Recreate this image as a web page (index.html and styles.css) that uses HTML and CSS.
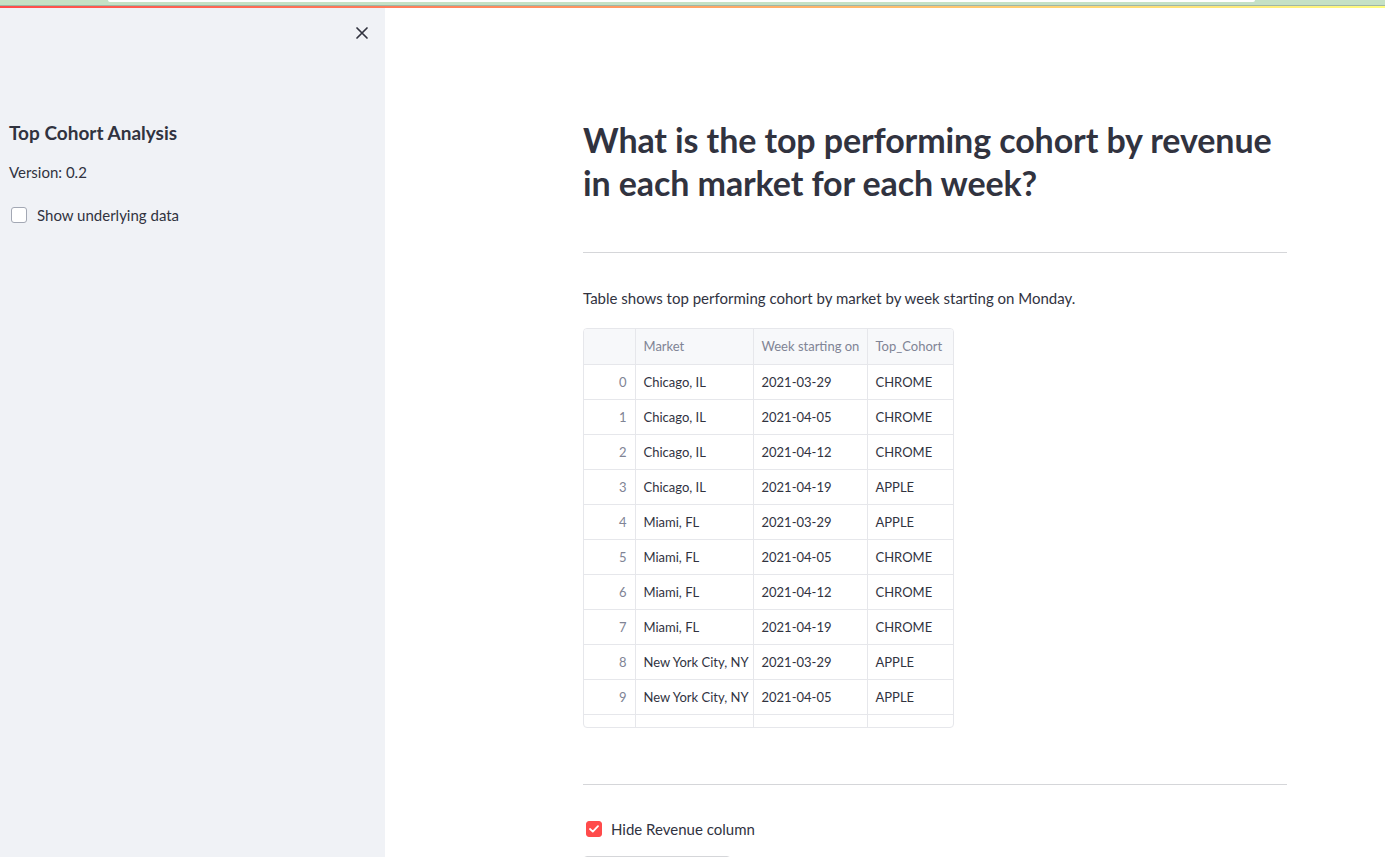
FILE: index.html
```html
<!DOCTYPE html>
<html lang="en">
<head>
<meta charset="utf-8">
<title>Top Cohort Analysis</title>
<link rel="stylesheet" href="styles.css">
</head>
<body>
<div class="chrome">
  <div class="chrome-tab"></div>
</div>
<div class="decoration"></div>
<div class="app">
  <aside class="sidebar">
    <div class="sidebar-head">
      <button class="close-btn" aria-label="Close sidebar">
        <svg width="14" height="14" viewBox="0 0 14 14"><path d="M2 2 L12 12 M12 2 L2 12" stroke="#31333f" stroke-width="1.7" stroke-linecap="round"/></svg>
      </button>
    </div>
    <h2 class="side-title">Top Cohort Analysis</h2>
    <p class="side-text">Version: 0.2</p>
    <label class="check">
      <span class="box"></span>
      <span>Show underlying data</span>
    </label>
  </aside>
  <main class="main">
    <div class="block">
      <h1 class="title">What is the top performing cohort by revenue in each market for each week?</h1>
      <hr class="divider">
      <p class="caption">Table shows top performing cohort by market by week starting on Monday.</p>
      <div class="table-wrap">
        <table class="df">
          <thead>
            <tr><th class="idx"></th><th class="c-market">Market</th><th class="c-week">Week starting on</th><th class="c-cohort">Top_Cohort</th></tr>
          </thead>
          <tbody>
            <tr><td class="idx">0</td><td>Chicago, IL</td><td>2021-03-29</td><td>CHROME</td></tr>
            <tr><td class="idx">1</td><td>Chicago, IL</td><td>2021-04-05</td><td>CHROME</td></tr>
            <tr><td class="idx">2</td><td>Chicago, IL</td><td>2021-04-12</td><td>CHROME</td></tr>
            <tr><td class="idx">3</td><td>Chicago, IL</td><td>2021-04-19</td><td>APPLE</td></tr>
            <tr><td class="idx">4</td><td>Miami, FL</td><td>2021-03-29</td><td>APPLE</td></tr>
            <tr><td class="idx">5</td><td>Miami, FL</td><td>2021-04-05</td><td>CHROME</td></tr>
            <tr><td class="idx">6</td><td>Miami, FL</td><td>2021-04-12</td><td>CHROME</td></tr>
            <tr><td class="idx">7</td><td>Miami, FL</td><td>2021-04-19</td><td>CHROME</td></tr>
            <tr><td class="idx">8</td><td>New York City, NY</td><td>2021-03-29</td><td>APPLE</td></tr>
            <tr><td class="idx">9</td><td>New York City, NY</td><td>2021-04-05</td><td>APPLE</td></tr>
            <tr><td class="idx">10</td><td>New York City, NY</td><td>2021-04-12</td><td>APPLE</td></tr>
          </tbody>
        </table>
      </div>
      <hr class="divider divider-2">
      <label class="check check-main">
        <span class="box checked">
          <svg width="10" height="8" viewBox="0 0 10 8"><path d="M1 4 L3.8 6.6 L9 1.2" fill="none" stroke="#fff" stroke-width="1.8" stroke-linecap="round" stroke-linejoin="round"/></svg>
        </span>
        <span>Hide Revenue column</span>
      </label>
      <div class="btn-stub"></div>
    </div>
  </main>
</div>
</body>
</html>
```
FILE: styles.css
```css
* { box-sizing: border-box; }
html, body { margin: 0; padding: 0; height: 858px; overflow: hidden; }
body {
  font-family: "Lato", "Liberation Sans", sans-serif;
  color: #31333f;
  background: #ffffff;
}
.chrome {
  height: 6px;
  background: #c5e1c5;
  border-bottom: 1px solid #9fb7a5;
  position: relative;
}
.chrome-tab {
  margin: 0 130px 0 108px;
  height: 2px;
  background: #ffffff;
  border-radius: 0 0 6px 6px;
}
.decoration {
  height: 2px;
  background: linear-gradient(90deg, #ff4b4b, #fffd80);
}
.app {
  display: flex;
  height: 849px;
}
.sidebar {
  width: 385px;
  flex: none;
  background: #f0f2f6;
  padding: 0 9px;
}
.sidebar-head {
  display: flex;
  justify-content: flex-end;
  padding-top: 16px;
  padding-right: 4px;
}
.close-btn {
  border: none;
  background: transparent;
  width: 20px;
  height: 18px;
  padding: 0;
  display: flex;
  align-items: center;
  justify-content: center;
  cursor: pointer;
}
.side-title {
  margin: 76px 0 0;
  font-size: 19px;
  font-weight: 700;
  line-height: 30px;
}
.side-text {
  margin: 12px 0 0;
  font-size: 15px;
  line-height: 24px;
}
.check {
  display: flex;
  align-items: center;
  gap: 11px;
  font-size: 15px;
  line-height: 24px;
}
.sidebar .check { margin-top: 19px; padding-left: 2px; gap: 10px; }
.box {
  width: 16px;
  height: 16px;
  border: 1px solid #a3a8b4;
  border-radius: 3px;
  background: #ffffff;
  flex: none;
  display: flex;
  align-items: center;
  justify-content: center;
}
.box.checked {
  background: #ff4b4b;
  border-color: #ff4b4b;
}
.main {
  flex: 1;
  overflow: hidden;
}
.block {
  width: 704px;
  margin-left: 198px;
  padding-top: 110px;
}
.title {
  margin: 0;
  font-size: 34px;
  font-weight: 700;
  line-height: 43px;
  letter-spacing: -0.1px;
}
.divider {
  border: none;
  border-top: 1px solid #d5d6d9;
  margin: 48px 0 0;
  height: 0;
}
.caption {
  margin: 33px 0 0;
  font-size: 15px;
  line-height: 24px;
}
.table-wrap {
  margin-top: 18px;
  width: 371px;
  height: 400px;
  overflow: hidden;
  border: 1px solid #e6e7eb;
  border-radius: 4px;
}
.df {
  border-collapse: collapse;
  font-size: 13px;
  table-layout: fixed;
  width: 370px;
}
.df th, .df td {
  height: 35px;
  padding: 0 8px;
  border-right: 1px solid #e6e7eb;
  border-bottom: 1px solid #e6e7eb;
  text-align: left;
  white-space: nowrap;
  overflow: hidden;
}
.df th:last-child, .df td:last-child { border-right: none; }
.df thead tr { background: #f7f8fa; }
.df th {
  font-weight: 400;
  color: #808495;
  height: 35px;
}
.df th.idx { width: 51px; }
.df th.c-market { width: 118px; }
.df th.c-week { width: 114px; }
.df th.c-cohort { width: 87px; }
.df td.idx {
  text-align: right;
  color: #808495;
}
.divider-2 { margin-top: 56px; }
.check-main {
  margin-top: 32px;
  padding-left: 3px;
  gap: 9px;
}
.btn-stub {
  margin-top: 15px;
  width: 148px;
  height: 40px;
  border: 1px solid #d5d6d9;
  border-radius: 4px;
}
```
